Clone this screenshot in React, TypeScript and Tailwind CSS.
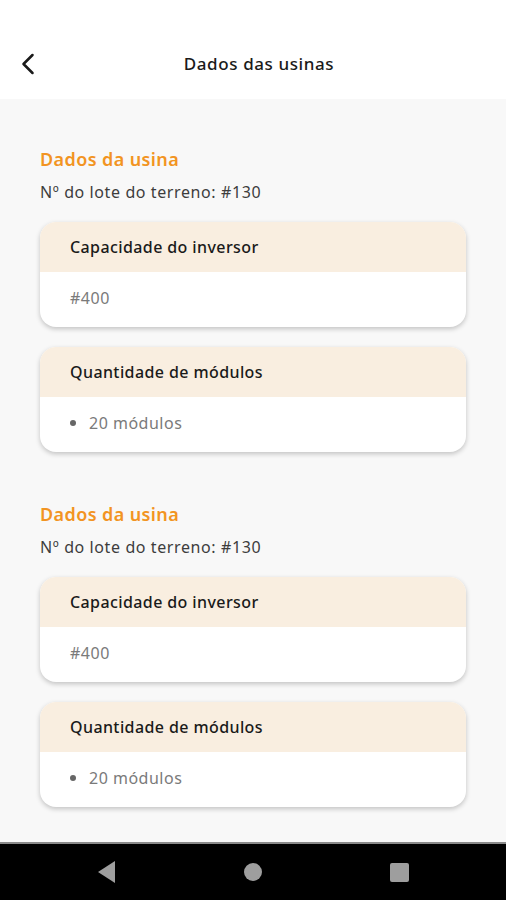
import { ChevronLeft } from 'lucide-react';

interface Usina {
  lote: string;
  capacidade: string;
  modulos: string;
}

const usinas: Usina[] = [
  { lote: '#130', capacidade: '#400', modulos: '20 módulos' },
  { lote: '#130', capacidade: '#400', modulos: '20 módulos' },
];

function InfoCard({ label, children }: { label: string; children: React.ReactNode }) {
  return (
    <div className="rounded-2xl bg-white shadow-[0_2px_5px_rgba(0,0,0,0.22)] overflow-hidden">
      <div className="h-[50px] flex items-center px-[30px] bg-[#f9eee0] text-[16px] text-[#1a1a1a] font-medium tracking-[0.4px]">
        {label}
      </div>
      <div className="h-[55px] flex items-center px-[30px] pb-[3px] text-[16px] text-[#7a7a7a] tracking-[0.5px]">{children}</div>
    </div>
  );
}

export default function App() {
  return (
    <div className="w-full h-[900px] flex flex-col bg-[#f8f8f8]" style={{ fontFamily: '"Noto Sans", Roboto, sans-serif' }}>
      {/* Top bar */}
      <header className="h-[99px] bg-white flex items-end pb-[17px] relative shrink-0">
        <ChevronLeft className="ml-[10px] text-[#1a1a1a]" size={36} strokeWidth={1.7} />
        <h1 className="absolute left-0 right-0 bottom-[23px] text-center text-[17px] text-[#1a1a1a] font-medium tracking-[0.6px] pl-[12px]">
          Dados das usinas
        </h1>
      </header>

      <main className="flex-1 overflow-hidden px-[40px] pt-[48px]">
        {usinas.map((u, i) => (
          <section key={i} className={i > 0 ? 'mt-[50px]' : ''}>
            <h2 className="text-[18px] leading-[24px] font-semibold text-[#f29422] tracking-[0.4px]">Dados da usina</h2>
            <p className="text-[16px] leading-[22px] mt-[10px] text-[#3d3d3d] tracking-[0.6px]">Nº do lote do terreno: {u.lote}</p>
            <div className="mt-[19px] flex flex-col gap-[20px]">
              <InfoCard label="Capacidade do inversor">{u.capacidade}</InfoCard>
              <InfoCard label="Quantidade de módulos">
                <span className="w-[6px] h-[6px] rounded-full bg-[#666] mr-[13px]"></span>
                {u.modulos}
              </InfoCard>
            </div>
          </section>
        ))}
      </main>

      {/* Android nav bar */}
      <nav className="h-[58px] shrink-0 bg-black border-t-2 border-[#8a8a8a] flex items-center justify-center gap-[128px]">
        <svg width="18" height="22" viewBox="0 0 18 22">
          <polygon points="17,0 17,22 0,11" fill="#9e9e9e" />
        </svg>
        <div className="w-[18px] h-[18px] rounded-full bg-[#9e9e9e]"></div>
        <div className="w-[19px] h-[19px] rounded-[2px] bg-[#9e9e9e]"></div>
      </nav>
    </div>
  );
}
